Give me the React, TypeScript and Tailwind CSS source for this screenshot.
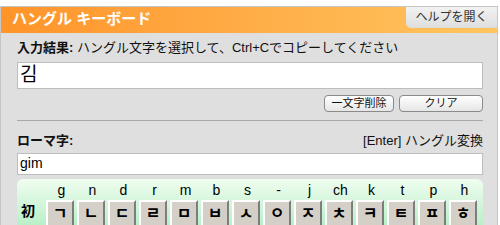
const keys = [
  { r: 'g', k: 'ㄱ' },
  { r: 'n', k: 'ㄴ' },
  { r: 'd', k: 'ㄷ' },
  { r: 'r', k: 'ㄹ' },
  { r: 'm', k: 'ㅁ' },
  { r: 'b', k: 'ㅂ' },
  { r: 's', k: 'ㅅ' },
  { r: '-', k: 'ㅇ' },
  { r: 'j', k: 'ㅈ' },
  { r: 'ch', k: 'ㅊ' },
  { r: 'k', k: 'ㅋ' },
  { r: 't', k: 'ㅌ' },
  { r: 'p', k: 'ㅍ' },
  { r: 'h', k: 'ㅎ' },
];

const font = { fontFamily: '"Liberation Sans", "Noto Sans CJK JP", sans-serif' };

export default function App() {
  return (
    <div className="w-[500px] h-[225px] overflow-hidden bg-white pt-[6px]" style={font}>
      <div className="w-[498px] border border-[#c6c6c6] bg-[#dfdfdf]">
        <div className="flex h-[26px] items-start justify-between bg-gradient-to-r from-[#ff9428] to-[#ffc55f]">
          <span className="pl-[11px] pt-[3px] text-[15px] font-bold leading-[18px] text-white">ハングル キーボード</span>
          <button className="h-[21px] w-[91px] rounded-bl-[5px] bg-gradient-to-b from-[#f2f2f2] to-[#dedede] text-[12px] leading-[21px] text-[#333]">
            ヘルプを開く
          </button>
        </div>

        <div className="pl-[16px] pr-[14px]">
          <div className="mt-[5px] h-[20px] text-[13px] leading-[20px] text-[#111]">
            <span className="font-bold">入力結果:</span> ハングル文字を選択して、Ctrl+Cでコピーしてください
          </div>
          <div className="mt-[4px] h-[27px] border border-[#bdbdbd] bg-white pl-[2px] text-[19px] leading-[24px] text-black">
            김
          </div>
          <div className="mt-[6px] flex justify-end gap-[5px]">
            <button className="h-[17px] w-[70px] rounded-[4px] border border-[#8a8a8a] bg-gradient-to-b from-white to-[#e6e6e6] text-[11px] leading-[15px] text-[#111]">
              一文字削除
            </button>
            <button className="h-[17px] w-[84px] rounded-[4px] border border-[#8a8a8a] bg-gradient-to-b from-white to-[#e6e6e6] text-[11px] leading-[15px] text-[#111]">
              クリア
            </button>
          </div>
          <div className="mt-[8px] h-px bg-[#a8a8a8]" />

          <div className="mt-[11px] flex h-[18px] items-center justify-between text-[13px] leading-[18px] text-[#111]">
            <span className="font-bold">ローマ字:</span>
            <span>[Enter] ハングル変換</span>
          </div>
          <div className="mt-[3px] h-[22px] border border-[#bdbdbd] bg-white pl-[2px] text-[14px] leading-[19px] text-black">
            gim
          </div>

          <div className="mt-[4px] h-[62px] rounded-t-[6px] bg-gradient-to-b from-[#f0fdf0] to-[#a4ebba] pt-[1px]">
            <div className="flex pl-[29px]">
              {keys.map((x) => (
                <div key={x.r} className="w-[31px] text-center text-[14px] leading-[20px] text-black">
                  {x.r}
                </div>
              ))}
            </div>
            <div className="flex items-start">
              <div className="w-[29px] pl-[4px] pt-[1px] text-[14px] font-bold leading-[20px] text-black">初</div>
              {keys.map((x) => (
                <div key={x.k} className="mr-[3px] flex h-[28px] w-[28px] items-center justify-center border-2 border-t-white border-l-white border-r-[#7d7d7d] border-b-[#7d7d7d] bg-[#d4d0c8] text-[16px] font-bold text-black">
                  {x.k}
                </div>
              ))}
            </div>
          </div>
        </div>
      </div>
    </div>
  );
}
